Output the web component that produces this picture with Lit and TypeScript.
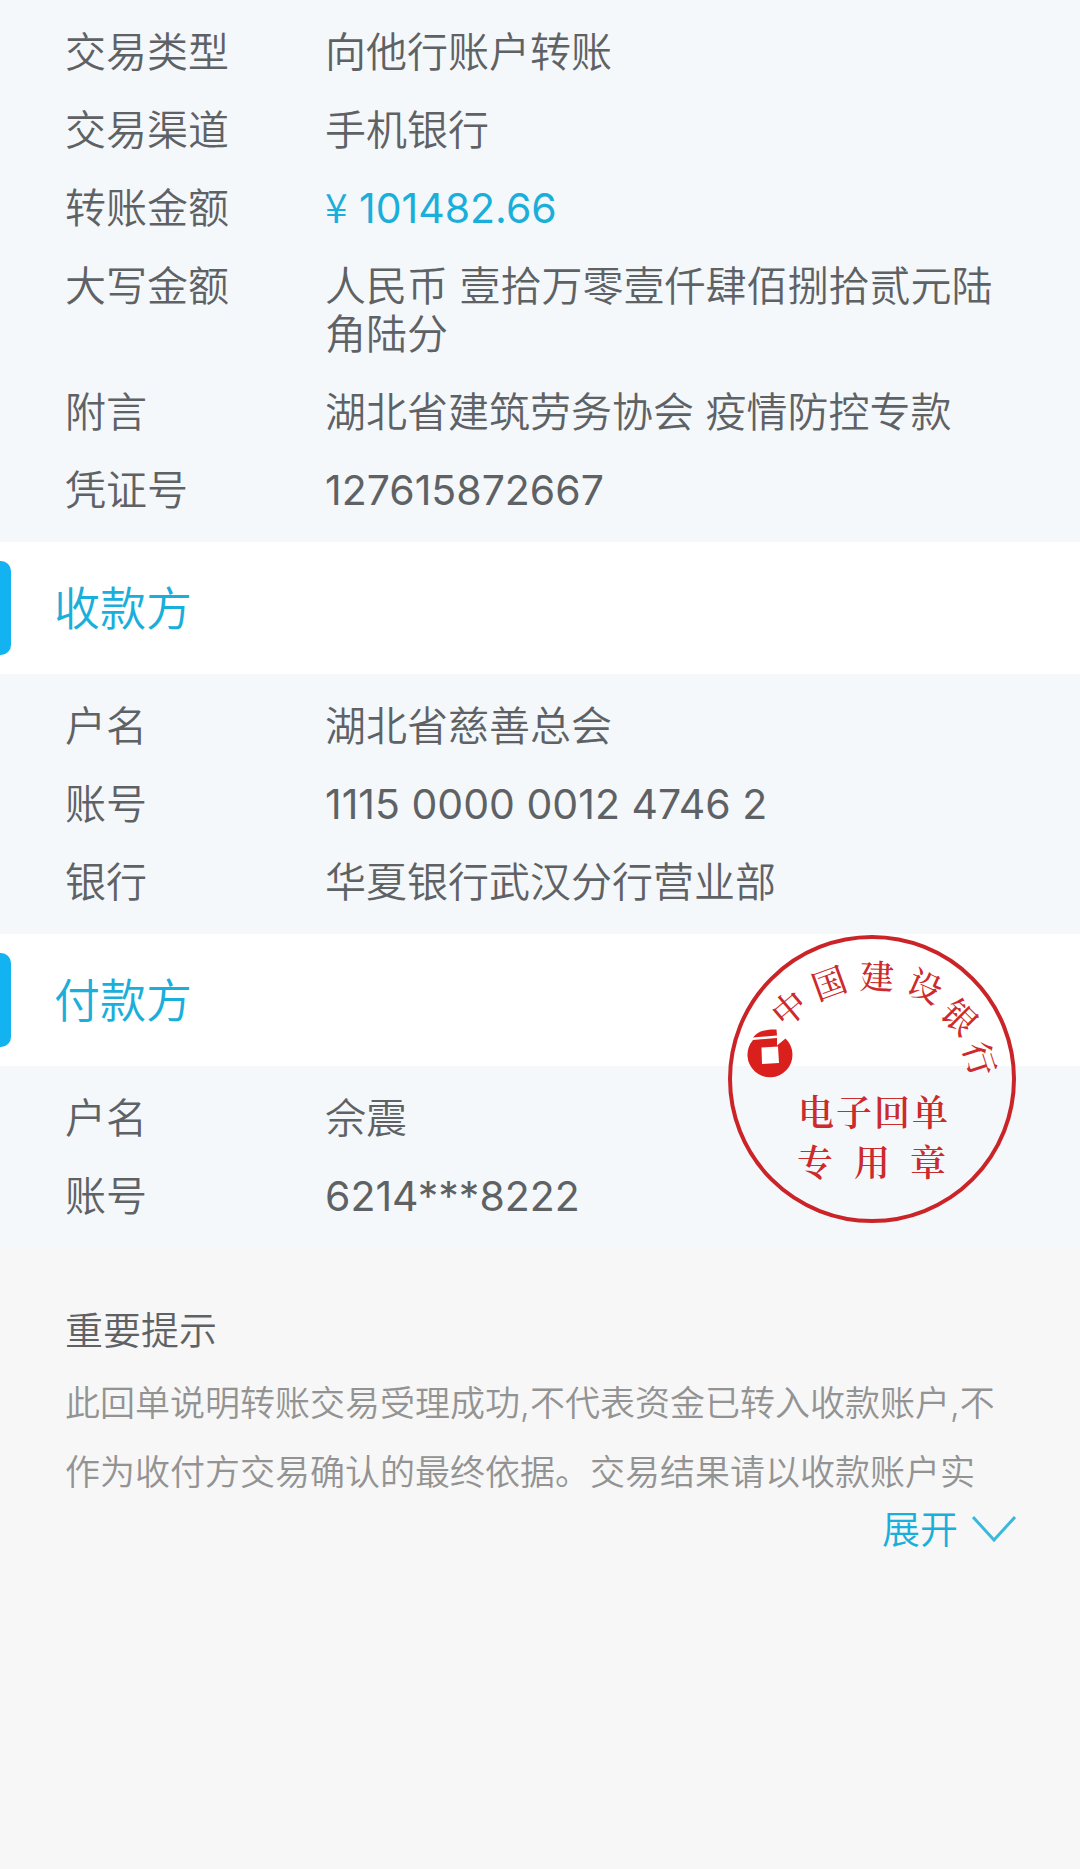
import { LitElement, html, css, svg } from "lit";
import { customElement, property } from "lit/decorators.js";
import { classMap } from "lit/directives/class-map.js";

interface Field {
  label: string;
  value: string;
  numeric?: boolean;
  amount?: boolean;
}

const transaction: Field[] = [
  { label: "交易类型", value: "向他行账户转账" },
  { label: "交易渠道", value: "手机银行" },
  { label: "转账金额", value: "101482.66", numeric: true, amount: true },
  { label: "大写金额", value: "人民币 壹拾万零壹仟肆佰捌拾贰元陆角陆分" },
  { label: "附言", value: "湖北省建筑劳务协会 疫情防控专款" },
  { label: "凭证号", value: "127615872667", numeric: true },
];

const payee: Field[] = [
  { label: "户名", value: "湖北省慈善总会" },
  { label: "账号", value: "1115 0000 0012 4746 2", numeric: true },
  { label: "银行", value: "华夏银行武汉分行营业部" },
];

const payer: Field[] = [
  { label: "户名", value: "佘震" },
  { label: "账号", value: "6214***8222", numeric: true },
];

@customElement("receipt-fields")
export class ReceiptFields extends LitElement {
  @property({ attribute: false }) fields: Field[] = [];

  static styles = css`
    :host {
      display: block;
      background: #f4f8fb;
    }
    .list {
      display: flex;
      flex-direction: column;
      gap: 30px;
      margin: 0;
      padding: 28px 65px;
      font-size: 41px;
      line-height: 48px;
    }
    .row {
      display: grid;
      grid-template-columns: 260px 1fr;
    }
    .value {
      margin: 0;
    }
    .numeric {
      font-weight: 400;
    }
    .amount {
      color: #1aaeda;
    }
    .currency {
      font-family: "Noto Sans CJK SC", sans-serif;
      font-weight: 350;
      line-height: 1;
    }
  `;

  render() {
    return html`<dl class="list">
      ${this.fields.map(
        (f) => html`<div class="row">
          <dt>${f.label}</dt>
          <dd class=${classMap({ value: true, numeric: !!f.numeric, amount: !!f.amount })}>${f.amount ? html`<span class="currency">¥</span> ` : ""}${f.value}</dd>
        </div>`
      )}
    </dl>`;
  }
}

@customElement("section-title")
export class SectionTitle extends LitElement {
  static styles = css`
    :host {
      display: flex;
      align-items: center;
      gap: 43px;
      height: 132px;
      background: #ffffff;
    }
    .bar {
      width: 11px;
      height: 94px;
      border-radius: 0 10px 10px 0;
      background: #12b3f0;
    }
    .title {
      margin: 0;
      font-size: 46px;
      font-weight: inherit;
      line-height: 54px;
      color: #1aaeda;
    }
  `;

  render() {
    return html`<span class="bar"></span>
      <h2 class="title"><slot></slot></h2>`;
  }
}

/* Characters round the rim of the seal: glyph, centre x, centre y, rotation. */
const rim: [string, number, number, number][] = [
  ["中", 61, 73, -40],
  ["国", 101, 48, -20],
  ["建", 149, 41, 2],
  ["设", 197, 51, 24],
  ["银", 232, 82, 45],
  ["行", 252, 124, 72],
];

const inner: [string, number, number][] = [
  ["电", 88, 178],
  ["子", 126, 178],
  ["回", 164, 178],
  ["单", 202, 178],
  ["专", 87, 228],
  ["用", 144, 228],
  ["章", 200, 228],
];

@customElement("bank-seal")
export class BankSeal extends LitElement {
  static styles = css`
    :host {
      display: block;
    }
    .seal {
      display: block;
      width: 100%;
    }
    .glyph {
      font-family: "Noto Serif CJK SC", "Noto Sans CJK SC", serif;
      font-size: 36px;
      font-weight: 600;
      text-anchor: middle;
      fill: #cc2a2c;
    }
    .rim {
      font-size: 34px;
      font-weight: 500;
    }
  `;

  render() {
    return html`<svg class="seal" viewBox="0 0 288 288" role="img" aria-label="中国建设银行 电子回单 专用章">
      <circle cx="144" cy="144" r="142" fill="none" stroke="#cb2428" stroke-width="4" />
      <path
        fill="#d9201c"
        fill-rule="evenodd"
        d="M25 105 L49 103 L49 110.500 L57.500 103.500 A22.500 22.500 0 1 1 25 105 Z M33.500 112.500 L34 129 L51 128 L50 111.500 Z"
      />
      <path fill="#d9201c" d="M25 102.500 C30 96 38 94 48.500 94.500 L49 100.500 Z" />
      ${rim.map(
        ([c, x, y, r]) => svg`<g transform="translate(${x} ${y}) rotate(${r})"><text class="glyph rim" y="13">${c}</text></g>`
      )}
      ${inner.map(([c, x, y]) => svg`<text class="glyph" x="${x}" y="${y + 13}">${c}</text>`)}
    </svg>`;
  }
}

@customElement("app-root")
export class AppRoot extends LitElement {
  static styles = css`
    :host {
      display: block;
      min-height: 100vh;
      background: #f7f7f7;
      color: #5f6265;
      font-family: Inter, "Noto Sans CJK SC", sans-serif;
      font-weight: 350;
    }
    .payer {
      position: relative;
    }
    .stamp {
      position: absolute;
      top: 1px;
      right: 64px;
      width: 288px;
    }
    .notice {
      padding: 56px 64px 0 65px;
    }
    .notice-title {
      margin: 0;
      font-size: 38px;
      font-weight: inherit;
      line-height: 52px;
    }
    .notice-text {
      margin: 13px 0 0;
      font-size: 35px;
      line-height: 69px;
      color: #939393;
    }
    .expand {
      display: flex;
      align-items: center;
      gap: 14px;
      margin: 0 0 0 auto;
      padding: 0;
      border: 0;
      background: none;
      font: inherit;
      font-size: 38px;
      line-height: 44px;
      color: #1aaeda;
      cursor: pointer;
    }
    .chevron {
      width: 44px;
      height: 28px;
    }
  `;

  render() {
    return html`
      <receipt-fields .fields=${transaction}></receipt-fields>
      <section>
        <section-title>收款方</section-title>
        <receipt-fields .fields=${payee}></receipt-fields>
      </section>
      <section class="payer">
        <section-title>付款方</section-title>
        <receipt-fields .fields=${payer}></receipt-fields>
        <bank-seal class="stamp"></bank-seal>
      </section>
      <section class="notice">
        <h3 class="notice-title">重要提示</h3>
        <p class="notice-text">此回单说明转账交易受理成功,不代表资金已转入收款账户,不作为收付方交易确认的最终依据。交易结果请以收款账户实</p>
        <button class="expand" type="button">
          展开
          <svg class="chevron" viewBox="0 0 44 28" fill="none" stroke="#3bb9dd" stroke-width="3" aria-hidden="true">
            <path d="M1 2 L22 25 L43 2" />
          </svg>
        </button>
      </section>
    `;
  }
}
